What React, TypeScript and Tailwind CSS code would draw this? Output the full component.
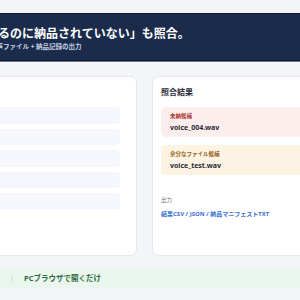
import React from 'react';

const font = { fontFamily: '"Noto Sans", "Noto Sans CJK JP", sans-serif' };

const Row: React.FC<{ label: string }> = ({ label }) => (
    <div className="h-[16.5px] rounded-[4px] bg-[#f6f7fc] flex items-center px-2 text-[6px] text-[#9aa3b5]">
        <span className="-ml-[60px]">{label}</span>
    </div>
);

export default function App() {
    const rows = ['voice_001.wav', 'voice_002.wav', 'voice_003.wav', 'voice_004.wav', 'voice_test.wav'];

    return (
        <div className="min-h-screen w-[300px] overflow-hidden bg-[#f3f5f9] pt-[13px]" style={font}>
            <div className="-ml-[150px] w-[589px] flex flex-col">
                {/* ヘッダー */}
                <div className="h-[48px] bg-[#1b2b4b] border-y border-[#0e1a35] shadow-[0_1px_0_#6b7590] flex flex-col justify-center pl-[88px] pt-[3px]">
                    <h1 className="text-[12px] leading-[15px] font-bold text-white whitespace-nowrap">「音声はあるのに納品されていない」も照合。</h1>
                    <p className="mt-[2px] text-[6.5px] leading-[8px] font-bold text-[#c9d1e2] whitespace-nowrap">出力：照合結果・音声ファイル + 納品記録の出力</p>
                </div>

                <div className="grid grid-cols-2 gap-[15px] mt-[15px]">
                    {/* 左：一覧 */}
                    <div className="h-[180px] bg-white rounded-[7px] border border-[#e4e8f0] pl-[9px] pr-[16px] pt-[10px]">
                        <h2 className="text-[8px] leading-[11px] font-bold text-[#1f2937]">音声ファイル一覧</h2>
                        <div className="mt-[9px] flex flex-col gap-[5px]">
                            {rows.map((r) => (
                                <Row key={r} label={r} />
                            ))}
                        </div>
                    </div>

                    {/* 右：照合結果 */}
                    <div className="h-[180px] bg-white rounded-[7px] border border-[#e4e8f0] px-[8px] pt-[9px]">
                        <h2 className="text-[8px] leading-[11px] font-bold text-[#1f2937]">照合結果</h2>
                        <div className="mt-[10px] rounded-[5px] bg-[#fdeeee] px-[9px] h-[30px] flex flex-col justify-center">
                            <p className="text-[5.5px] leading-[7px] font-bold text-[#a83838]">未納候補</p>
                            <p className="mt-[3px] text-[7px] leading-[9px] font-bold text-[#1f2937]">voice_004.wav</p>
                        </div>
                        <div className="mt-[8px] rounded-[5px] bg-[#fdf3e2] px-[9px] h-[30px] flex flex-col justify-center">
                            <p className="text-[5.5px] leading-[7px] font-bold text-[#93641c]">余分なファイル候補</p>
                            <p className="mt-[3px] text-[7px] leading-[9px] font-bold text-[#1f2937]">voice_test.wav</p>
                        </div>
                        <p className="mt-[22px] text-[5.5px] leading-[7px] text-[#6b7280]">出力</p>
                        <p className="mt-[6px] text-[6px] leading-[8px] font-bold text-[#3a6fd1]">結果CSV / JSON / 納品マニフェストTXT</p>
                    </div>
                </div>

                {/* フッター */}
                <div className="mt-[12px] h-[21px] bg-[#eaf6ee] flex items-center gap-[10px] pl-[90px] text-[7.5px] font-bold text-[#2d6a3e] whitespace-nowrap">
                    <span>インストール不要</span>
                    <span className="font-normal text-[#b9cfc0]">|</span>
                    <span>PCブラウザで開くだけ</span>
                </div>
            </div>
        </div>
    );
}
